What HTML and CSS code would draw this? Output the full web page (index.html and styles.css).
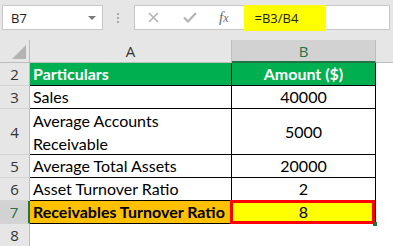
FILE: index.html
```html
<!DOCTYPE html>
<html>
<head>
<meta charset="utf-8">
<link rel="stylesheet" href="styles.css">
</head>
<body>
<div class="toolbar">
  <div class="namebox"><span class="name">B7</span><span class="arrow"></span></div>
  <div class="dots"><i></i><i></i><i></i></div>
  <div class="formula">
    <svg class="ic-x" width="11" height="11" viewBox="0 0 11 11"><path d="M1 1 L10 10 M10 1 L1 10" stroke="#b4b4b4" stroke-width="1.6" fill="none"/></svg>
    <svg class="ic-check" width="14" height="11" viewBox="0 0 14 11"><path d="M1 5.5 L5 9.5 L13 1" stroke="#b4b4b4" stroke-width="2.2" fill="none"/></svg>
    <span class="fx">f<span class="fx-x">x</span></span>
    <span class="ftext">=B3/B4</span>
  </div>
</div>
<div class="grid">
  <div class="corner"><span class="tri"></span></div>
  <div class="colh">A</div>
  <div class="colh sel">B</div>
  <div class="colh rest"></div>

  <div class="rowh">2</div>
  <div class="cell hdr">Particulars</div>
  <div class="cell hdr num">Amount ($)</div>
  <div class="blank"></div>

  <div class="rowh">3</div>
  <div class="cell">Sales</div>
  <div class="cell num">40000</div>
  <div class="blank"></div>

  <div class="rowh">4</div>
  <div class="cell wrap">Average Accounts Receivable</div>
  <div class="cell num">5000</div>
  <div class="blank"></div>

  <div class="rowh">5</div>
  <div class="cell">Average Total Assets</div>
  <div class="cell num">20000</div>
  <div class="blank"></div>

  <div class="rowh">6</div>
  <div class="cell">Asset Turnover Ratio</div>
  <div class="cell num">2</div>
  <div class="blank"></div>

  <div class="rowh selr">7</div>
  <div class="cell result">Receivables Turnover Ratio</div>
  <div class="cell num yellow">8<span class="redbox"></span><span class="handle"></span></div>
  <div class="blank"></div>

  <div class="rowh last">8</div>
  <div class="blank"></div>
  <div class="blank"></div>
  <div class="blank"></div>
</div>
</body>
</html>
```
FILE: styles.css
```css
* { box-sizing: border-box; }
html, body { margin: 0; padding: 0; }
body {
  width: 393px;
  height: 246px;
  overflow: hidden;
  background: #ffffff;
  font-family: "Lato", "Liberation Sans", sans-serif;
}
.toolbar {
  height: 40px;
  background: #e6e6e6;
  display: flex;
  align-items: flex-start;
  padding-top: 5px;
}
.namebox {
  margin-left: 2px;
  width: 101px;
  height: 25px;
  background: #fff;
  border: 1px solid #c8c8c8;
  display: flex;
  align-items: center;
  padding-left: 8px;
  font-family: "Open Sans", sans-serif;
  font-size: 13px;
  color: #222;
}
.arrow {
  margin-left: auto;
  margin-right: 6px;
  width: 0;
  height: 0;
  border-left: 4px solid transparent;
  border-right: 4px solid transparent;
  border-top: 4px solid #7a7a7a;
}
.dots {
  margin-left: 14px;
  margin-top: 8px;
  display: flex;
  flex-direction: column;
  gap: 2px;
}
.dots i {
  display: block;
  width: 2px;
  height: 2px;
  background: #a8a8a8;
}
.formula {
  margin-left: 15px;
  width: 256px;
  height: 25px;
  background: #fff;
  border: 1px solid #c8c8c8;
  display: flex;
  align-items: center;
}
.ic-x { margin-left: 13px; }
.ic-check { margin-left: 24px; }
.fx {
  margin-left: 22px;
  font-family: "Liberation Serif", serif;
  font-style: italic;
  font-size: 15px;
  color: #6a6a6a;
}
.fx-x { font-size: 12px; }
.ftext {
  margin-left: 15px;
  align-self: stretch;
  margin-top: -1px;
  margin-bottom: -2px;
  width: 82px;
  background: #ffff00;
  display: flex;
  align-items: center;
  padding-left: 11px;
  font-family: "Open Sans", sans-serif;
  font-size: 13px;
  color: #222;
}
.grid {
  display: grid;
  grid-template-columns: 30px 202px 144px 17px;
  grid-template-rows: 23px 23px 23px 46px 23px 23px 23px 22px;
}
.corner {
  background: #e6e6e6;
  border-right: 1px solid #bdbdbd;
  border-bottom: 1px solid #bdbdbd;
  position: relative;
}
.tri {
  position: absolute;
  right: 3px;
  bottom: 3px;
  width: 0;
  height: 0;
  border-left: 14px solid transparent;
  border-bottom: 14px solid #b4b4b4;
}
.colh {
  background: #e6e6e6;
  border-right: 1px solid #bdbdbd;
  border-bottom: 1px solid #bdbdbd;
  display: flex;
  align-items: center;
  justify-content: center;
  font-family: "Open Sans", sans-serif;
  font-size: 15px;
  color: #333;
}
.colh.sel {
  background: #d2d2d2;
  color: #217346;
  border-bottom: 2px solid #217346;
}
.colh.rest { border-right: none; }
.rowh {
  background: #e6e6e6;
  border-right: 1px solid #bdbdbd;
  border-bottom: 1px solid #d4d4d4;
  display: flex;
  align-items: center;
  justify-content: center;
  font-family: "Open Sans", sans-serif;
  font-size: 15px;
  color: #333;
}
.rowh.selr {
  background: #d2d2d2;
  color: #217346;
  border-right: 2px solid #217346;
}
.rowh.last { border-bottom: none; }
.cell {
  border-right: 1px solid #000;
  border-bottom: 1px solid #000;
  font-size: 16px;
  line-height: 22px;
  color: #000;
  padding-left: 3px;
  white-space: nowrap;
  overflow: hidden;
}
.cell.wrap {
  white-space: normal;
  line-height: 23px;
  padding-right: 40px;
}
.cell.num {
  text-align: center;
  padding-left: 0;
  display: flex;
  align-items: center;
  justify-content: center;
}
.cell.hdr {
  background: #00b050;
  color: #fff;
  font-weight: bold;
}
.cell.result {
  background: #ffc000;
  font-weight: bold;
}
.cell.yellow {
  background: #ffff00;
  position: relative;
  overflow: visible;
}
.redbox {
  position: absolute;
  left: -2px;
  top: -1px;
  right: 0;
  bottom: -1px;
  border: 3px solid #ff0000;
}
.handle {
  position: absolute;
  right: -2px;
  bottom: -3px;
  width: 4px;
  height: 4px;
  background: #217346;
}
.blank { background: #fff; }
```
